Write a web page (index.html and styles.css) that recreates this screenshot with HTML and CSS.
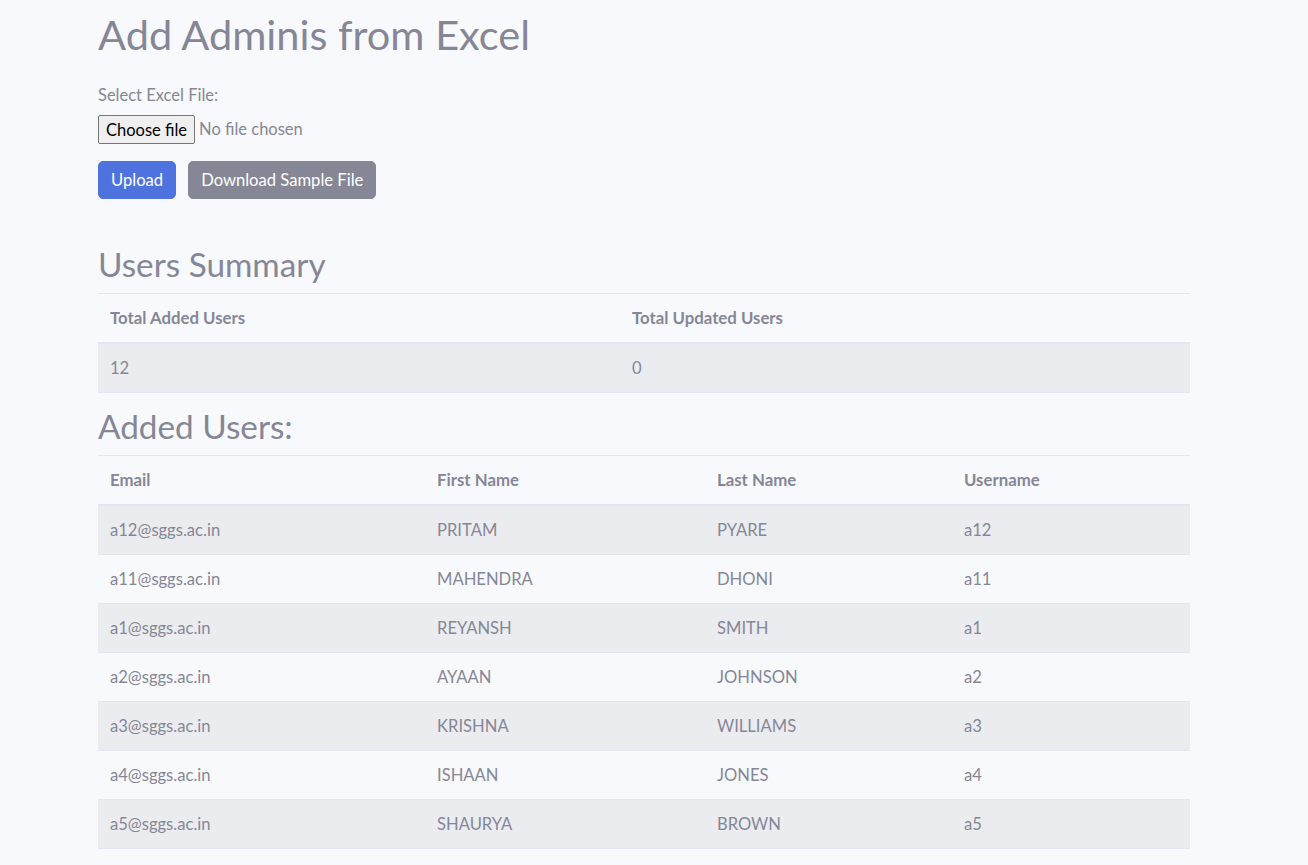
FILE: index.html
```html
<!DOCTYPE html>
<html lang="en">
<head>
<meta charset="utf-8">
<title>Add Adminis from Excel</title>
<link rel="stylesheet" href="styles.css">
</head>
<body>
<div class="page">
  <h1 class="title">Add Adminis from Excel</h1>
  <form class="upload-form">
    <label class="field-label" for="excel-btn">Select Excel File:</label>
    <div class="file-field">
      <button type="button" id="excel-btn" class="file-button">Choose file</button>
      <span class="file-status">No file chosen</span>
    </div>
    <div class="actions">
      <button type="button" class="btn btn-primary">Upload</button>
      <button type="button" class="btn btn-secondary">Download Sample File</button>
    </div>
  </form>

  <h2 class="section-title summary-title">Users Summary</h2>
  <table class="table summary-table">
    <thead>
      <tr><th class="col-added">Total Added Users</th><th>Total Updated Users</th></tr>
    </thead>
    <tbody>
      <tr><td>12</td><td>0</td></tr>
    </tbody>
  </table>

  <h2 class="section-title">Added Users:</h2>
  <table class="table users-table">
    <thead>
      <tr>
        <th class="col-email">Email</th>
        <th class="col-first">First Name</th>
        <th class="col-last">Last Name</th>
        <th>Username</th>
      </tr>
    </thead>
    <tbody>
      <tr><td>a12@sggs.ac.in</td><td>PRITAM</td><td>PYARE</td><td>a12</td></tr>
      <tr><td>a11@sggs.ac.in</td><td>MAHENDRA</td><td>DHONI</td><td>a11</td></tr>
      <tr><td>a1@sggs.ac.in</td><td>REYANSH</td><td>SMITH</td><td>a1</td></tr>
      <tr><td>a2@sggs.ac.in</td><td>AYAAN</td><td>JOHNSON</td><td>a2</td></tr>
      <tr><td>a3@sggs.ac.in</td><td>KRISHNA</td><td>WILLIAMS</td><td>a3</td></tr>
      <tr><td>a4@sggs.ac.in</td><td>ISHAAN</td><td>JONES</td><td>a4</td></tr>
      <tr><td>a5@sggs.ac.in</td><td>SHAURYA</td><td>BROWN</td><td>a5</td></tr>
    </tbody>
  </table>
</div>
</body>
</html>
```

FILE: styles.css
```css
* { box-sizing: border-box; }

html, body {
  margin: 0;
  padding: 0;
  background: #f8f9fc;
}

body {
  font-family: "Lato", "Open Sans", sans-serif;
  font-size: 16px;
  line-height: 1.5;
  color: #858796;
}

.page {
  width: 1092px;
  margin-left: 98px;
  padding-top: 10px;
  padding-bottom: 16px;
}

.title {
  margin: 0 0 25px;
  font-size: 41.5px;
  font-weight: 400;
  line-height: 48px;
  color: #858796;
}

.upload-form {
  display: flex;
  flex-direction: column;
  align-items: flex-start;
}

.field-label {
  display: block;
  font-size: 16.5px;
  line-height: 24px;
  margin-bottom: 8px;
}

.file-field {
  display: flex;
  align-items: center;
  gap: 4px;
  height: 29px;
}

.file-button {
  font-family: inherit;
  font-size: 16.5px;
  color: #000;
  background: #efefef;
  border: 1px solid #767676;
  border-radius: 2px;
  padding: 1px 7px;
  height: 29px;
  line-height: 24px;
}

.file-status {
  font-size: 16.5px;
  color: #858796;
}

.actions {
  display: flex;
  gap: 12px;
  margin-top: 17px;
}

.btn {
  font-family: inherit;
  font-size: 16.6px;
  line-height: 24px;
  padding: 6px 12px;
  border: 1px solid transparent;
  border-radius: 5px;
  color: #fff;
  cursor: pointer;
}

.btn-primary {
  background: #4e73df;
  border-color: #4e73df;
}

.btn-secondary {
  background: #858796;
  border-color: #858796;
}

.section-title {
  margin: 0 0 12px;
  font-size: 33.3px;
  font-weight: 400;
  line-height: 34px;
  color: #858796;
}

.summary-title {
  margin-top: 48px;
}

.table {
  width: 100%;
  border-collapse: collapse;
  margin-bottom: 16px;
  color: #858796;
}

.table th,
.table td {
  padding: 12px;
  text-align: left;
  vertical-align: top;
  border-top: 1px solid #e3e6f0;
  line-height: 24px;
}

.table th {
  font-weight: 700;
  font-size: 16.8px;
}

.table thead th {
  border-bottom: 2px solid #e3e6f0;
}

.table td {
  font-size: 16.6px;
}

.table tbody tr:nth-child(odd) {
  background: rgba(0, 0, 0, 0.05);
}

.table tbody tr:last-child td {
  border-bottom: 1px solid #e3e6f0;
}

.summary-table .col-added { width: 522px; }

.users-table .col-email { width: 327px; }
.users-table .col-first { width: 280px; }
.users-table .col-last { width: 247px; }
```
